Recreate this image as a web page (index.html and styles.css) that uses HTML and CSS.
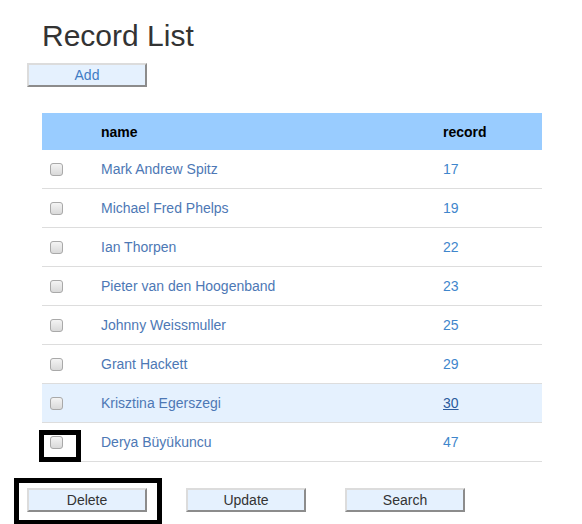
FILE: index.html
```html
<!DOCTYPE html>
<html>
<head>
<meta charset="utf-8">
<link rel="stylesheet" href="styles.css">
</head>
<body>
<div class="page">
  <h1 class="title">Record List</h1>
  <button class="btn btn-add">Add</button>
  <table class="records">
    <thead>
      <tr><th class="c-check"></th><th class="c-name">name</th><th class="c-rec">record</th></tr>
    </thead>
    <tbody>
      <tr><td class="c-check"><input type="checkbox" class="chk"></td><td class="c-name">Mark Andrew Spitz</td><td class="c-rec">17</td></tr>
      <tr><td class="c-check"><input type="checkbox" class="chk"></td><td class="c-name">Michael Fred Phelps</td><td class="c-rec">19</td></tr>
      <tr><td class="c-check"><input type="checkbox" class="chk"></td><td class="c-name">Ian Thorpen</td><td class="c-rec">22</td></tr>
      <tr><td class="c-check"><input type="checkbox" class="chk"></td><td class="c-name">Pieter van den Hoogenband</td><td class="c-rec">23</td></tr>
      <tr><td class="c-check"><input type="checkbox" class="chk"></td><td class="c-name">Johnny Weissmuller</td><td class="c-rec">25</td></tr>
      <tr><td class="c-check"><input type="checkbox" class="chk"></td><td class="c-name">Grant Hackett</td><td class="c-rec">29</td></tr>
      <tr class="hover"><td class="c-check"><input type="checkbox" class="chk"></td><td class="c-name">Krisztina Egerszegi</td><td class="c-rec"><span class="rec-link">30</span></td></tr>
      <tr><td class="c-check"><span class="mark-chk"><input type="checkbox" class="chk"></span></td><td class="c-name">Derya Büyükuncu</td><td class="c-rec">47</td></tr>
    </tbody>
  </table>
  <div class="actions">
    <span class="mark-btn"><button class="btn">Delete</button></span>
    <button class="btn">Update</button>
    <button class="btn">Search</button>
  </div>
</div>
</body>
</html>
```

FILE: styles.css
```css
html, body {
  margin: 0;
  padding: 0;
  background: #fff;
  font-family: "Liberation Sans", Arial, sans-serif;
}

.page {
  padding-left: 27px;
  min-height: 524px;
  box-sizing: border-box;
}

.title {
  margin: 19px 0 0 15px;
  font-size: 30px;
  line-height: 34px;
  font-weight: normal;
  color: #333;
}

.btn {
  display: block;
  box-sizing: border-box;
  width: 120px;
  height: 24px;
  padding: 0;
  border: 2px solid;
  border-color: #dcdcdc #8c8c8c #8c8c8c #dcdcdc;
  background: #e5f1fe;
  font-family: "Liberation Sans", Arial, sans-serif;
  font-size: 14px;
  color: #333;
}

.btn-add {
  margin-top: 10px;
  color: #3f7cc4;
}

.records {
  margin: 26px 0 0 15px;
  width: 500px;
  border-collapse: collapse;
  font-size: 14px;
}

.records th {
  height: 37px;
  padding: 0;
  background: #99ccff;
  text-align: left;
  font-weight: bold;
  color: #000;
}

.records td {
  height: 38px;
  padding: 0;
  border-bottom: 1px solid #dddddd;
  color: #4d78b5;
}

.c-check {
  width: 49px;
  padding-left: 8px !important;
  box-sizing: border-box;
}

.c-name {
  padding-left: 10px !important;
}

.c-rec {
  width: 109px;
  padding-left: 10px !important;
  box-sizing: border-box;
}

.records td.c-rec {
  color: #3f86cc;
}

.records tr.hover td {
  background: #e5f1fe;
}

.rec-link {
  color: #2a5b9c;
  text-decoration: underline;
}

.chk {
  appearance: none;
  -webkit-appearance: none;
  display: block;
  width: 13px;
  height: 13px;
  margin: 0;
  box-sizing: border-box;
  border: 1px solid #a9a9a9;
  border-radius: 3px;
  background: linear-gradient(#f4f4f4, #d9d9d9);
}

.mark-chk {
  position: relative;
  display: block;
  width: 13px;
}

.mark-chk::after {
  content: "";
  position: absolute;
  left: -11px;
  top: -6px;
  width: 42px;
  height: 32px;
  box-sizing: border-box;
  border: 5px solid #000;
  pointer-events: none;
}

.actions {
  display: flex;
  gap: 39px;
  margin-top: 26px;
}

.mark-btn {
  position: relative;
  display: block;
}

.mark-btn::after {
  content: "";
  position: absolute;
  left: -13px;
  top: -10px;
  right: -15px;
  bottom: -13px;
  border: 5px solid #000;
  pointer-events: none;
}
```
